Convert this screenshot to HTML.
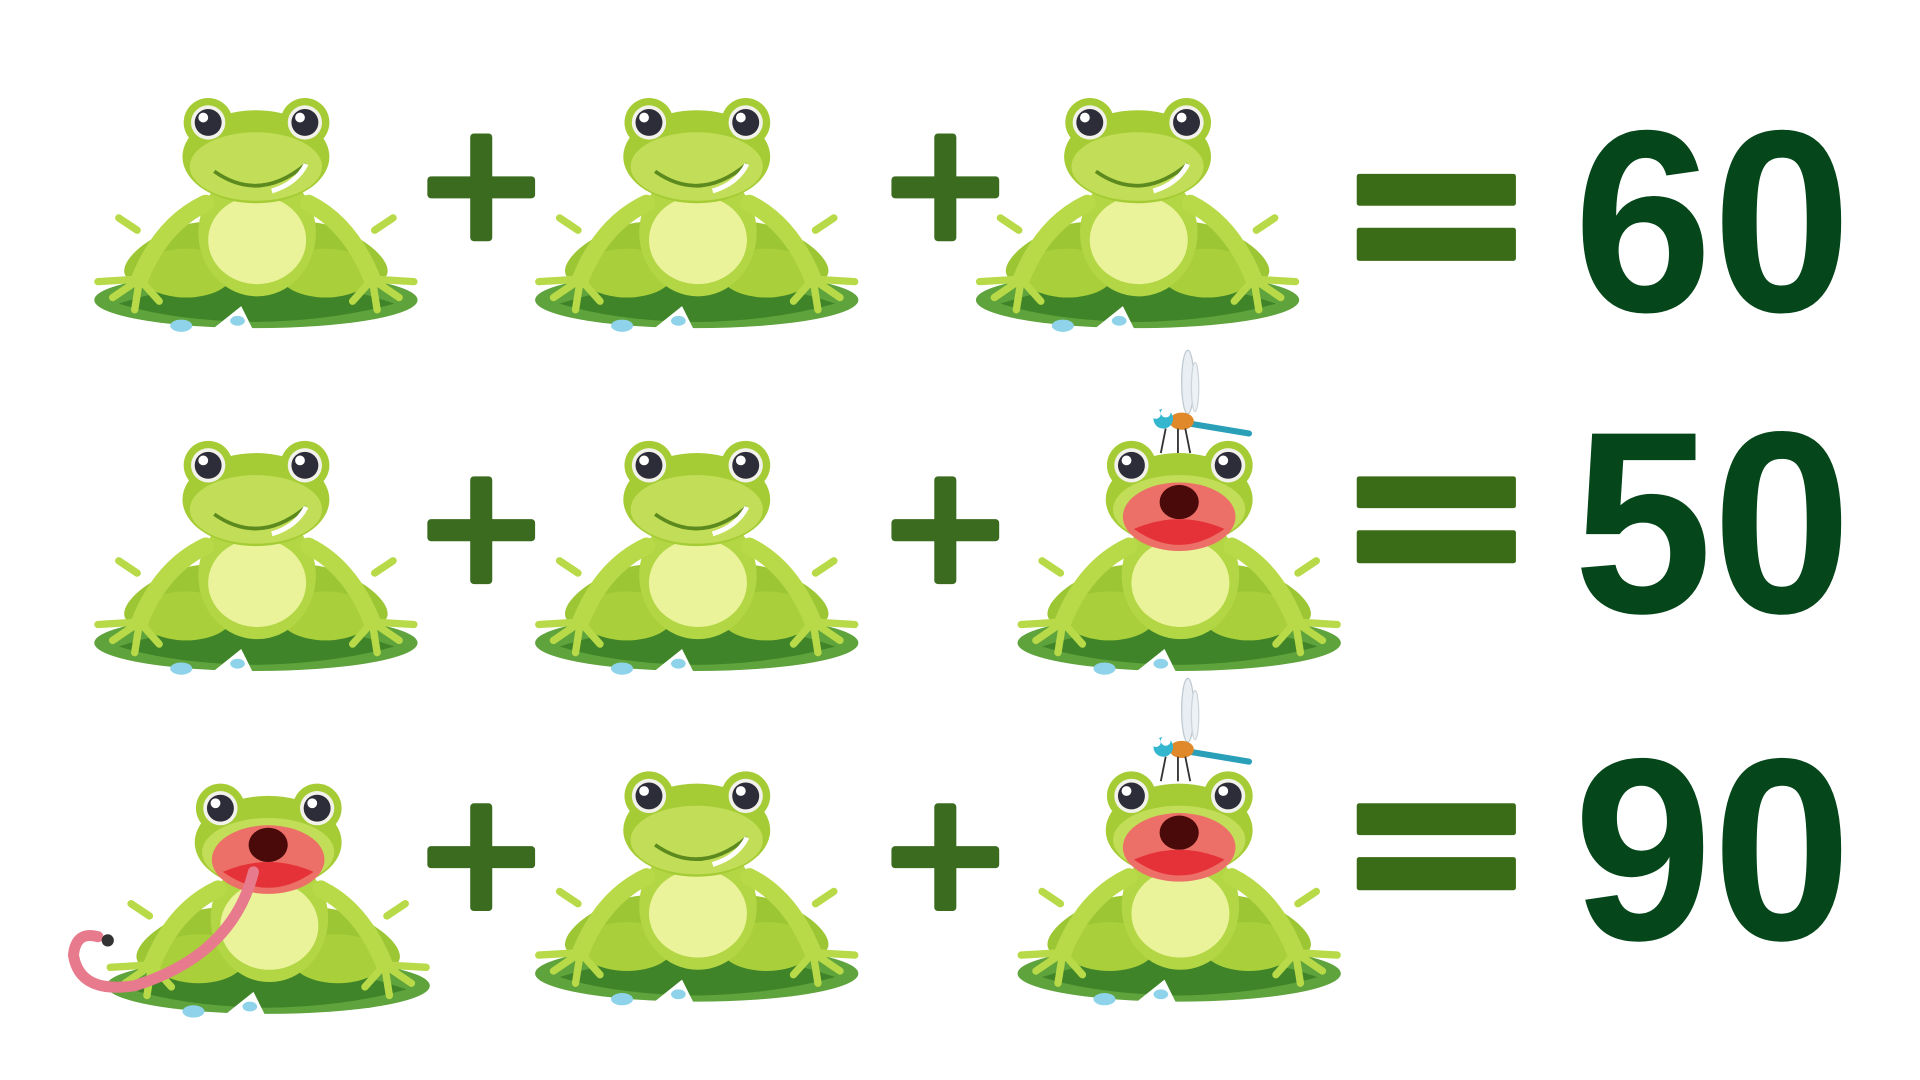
<!DOCTYPE html>
<html><head><meta charset="utf-8"><style>html,body{margin:0;padding:0;background:#fff;overflow:hidden}svg{display:block}</style></head>
<body>
<svg width="1920" height="1080" viewBox="0 0 1568 882" xmlns="http://www.w3.org/2000/svg">
<defs>
<g id="body">
  <ellipse cx="137" cy="167" rx="132" ry="23" fill="#5fa33c"/>
  <path d="M25,170 Q80,152 137,152 Q200,152 250,170 Q200,184 137,185 Q70,184 25,170Z" fill="#3f8428"/>
  <path d="M100,192 L125,172 L135,192Z" fill="#fff"/>
  <ellipse cx="76" cy="188" rx="9" ry="5" fill="#8fd3ea"/>
  <ellipse cx="122" cy="184" rx="6" ry="4" fill="#8fd3ea"/>
  <ellipse cx="70" cy="128" rx="44" ry="18" transform="rotate(-25 70 128)" fill="#9cc634"/>
  <ellipse cx="204" cy="128" rx="44" ry="18" transform="rotate(25 204 128)" fill="#9cc634"/>
  <ellipse cx="80" cy="145" rx="38" ry="20" fill="#a9cf3a"/>
  <ellipse cx="194" cy="145" rx="38" ry="20" fill="#a9cf3a"/>
  <ellipse cx="138" cy="112" rx="48" ry="52" fill="#b3d644"/>
  <ellipse cx="138" cy="118" rx="40" ry="36" fill="#eaf39a"/>
  <path d="M96,88 Q60,105 42,150" stroke="#b8da48" stroke-width="14" fill="none" stroke-linecap="round"/>
  <path d="M180,88 Q214,105 232,150" stroke="#b8da48" stroke-width="14" fill="none" stroke-linecap="round"/>
  <g stroke="#b8da48" stroke-width="6" stroke-linecap="round" fill="none">
    <path d="M42,150 L8,152 M42,150 L20,165 M42,150 L38,175 M42,150 L58,168"/>
    <path d="M232,150 L266,152 M232,150 L254,165 M232,150 L236,175 M232,150 L216,168"/>
    <path d="M40,110 L25,100 M234,110 L249,100"/>
  </g>
</g>
<g id="head">
  <circle cx="98" cy="22" r="20" fill="#a5cc35"/>
  <circle cx="177" cy="22" r="20" fill="#a5cc35"/>
  <ellipse cx="137" cy="50" rx="60" ry="38" fill="#a5cc35"/>
  <ellipse cx="137" cy="58" rx="54" ry="28" fill="#c2de58"/>
  <circle cx="98" cy="22" r="14" fill="#f2f2ea"/>
  <circle cx="177" cy="22" r="14" fill="#f2f2ea"/>
  <circle cx="98" cy="22" r="11" fill="#2d2d3a"/>
  <circle cx="177" cy="22" r="11" fill="#2d2d3a"/>
  <circle cx="94" cy="18" r="4" fill="#fff"/>
  <circle cx="173" cy="18" r="4" fill="#fff"/>
</g>
<g id="frog">
  <use href="#body"/><use href="#head"/>
  <path d="M103,62 Q140,88 178,56" stroke="#5d8a1e" stroke-width="3" fill="none"/>
  <path d="M150,78 Q170,72 178,56" stroke="#fff" stroke-width="4" fill="none"/>
</g>
<g id="ofrog">
  <use href="#body"/><use href="#head"/>
  <ellipse cx="137" cy="64" rx="46" ry="28" fill="#ec7068"/>
  <ellipse cx="137" cy="52" rx="16" ry="14" fill="#4a0a0a"/>
  <path d="M100,74 Q137,58 174,74 Q137,100 100,74Z" fill="#e53238"/>
</g>
<g id="dfly">
  <ellipse cx="40" cy="20" rx="5" ry="26" fill="#e8eef2" stroke="#bcc8d0" stroke-width="1"/>
  <ellipse cx="46" cy="24" rx="3" ry="20" fill="#eef2f5" stroke="#ccd4da" stroke-width="1"/>
  <path d="M30,52 L90,62" stroke="#2a9fb8" stroke-width="5" stroke-linecap="round"/>
  <ellipse cx="35" cy="52" rx="10" ry="7" fill="#e0892a"/>
  <circle cx="20" cy="50" r="8" fill="#34b6cf"/>
  <circle cx="14" cy="46" r="4" fill="#fff"/><circle cx="22" cy="45" r="4" fill="#fff"/>
  <path d="M22,58 L18,78 M32,58 L32,78 M38,58 L42,78" stroke="#333" stroke-width="1.5"/>
</g>
<g id="plus" fill="#3a6b1e"><rect x="-44" y="-9" width="88" height="18" rx="3"/><rect x="-9" y="-44" width="18" height="88" rx="3"/></g>
<g id="eq" fill="#3a6b16"><rect x="0" y="0" width="130" height="26" rx="2"/><rect x="0" y="44" width="130" height="27" rx="2"/></g>
</defs>

<use href="#frog" x="72" y="78"/>
<use href="#frog" x="432" y="78"/>
<use href="#frog" x="792" y="78"/>
<use href="#plus" x="393" y="153"/>
<use href="#plus" x="772" y="153"/>
<use href="#eq" x="1108" y="142"/>

<use href="#frog" x="72" y="358"/>
<use href="#frog" x="432" y="358"/>
<use href="#ofrog" x="826" y="358"/>
<use href="#dfly" x="930" y="292"/>
<use href="#plus" x="393" y="433"/>
<use href="#plus" x="772" y="433"/>
<use href="#eq" x="1108" y="389"/>

<use href="#ofrog" x="82" y="638"/>
<path d="M207,712 Q190,780 110,805 Q65,812 60,780 Q62,760 80,765" stroke="#e77a8c" stroke-width="9" fill="none" stroke-linecap="round"/>
<circle cx="88" cy="768" r="5" fill="#333"/>
<use href="#frog" x="432" y="628"/>
<use href="#ofrog" x="826" y="628"/>
<use href="#dfly" x="930" y="560"/>
<use href="#plus" x="393" y="700"/>
<use href="#plus" x="772" y="700"/>
<use href="#eq" x="1108" y="656"/>

<g font-family="Liberation Sans, sans-serif" font-weight="bold" font-size="212" fill="#05461a">
<text x="1285" y="254" textLength="227" lengthAdjust="spacingAndGlyphs">60</text>
<text x="1285" y="500" textLength="227" lengthAdjust="spacingAndGlyphs">50</text>
<text x="1285" y="767" textLength="227" lengthAdjust="spacingAndGlyphs">90</text>
</g>
</svg>
</body></html>
